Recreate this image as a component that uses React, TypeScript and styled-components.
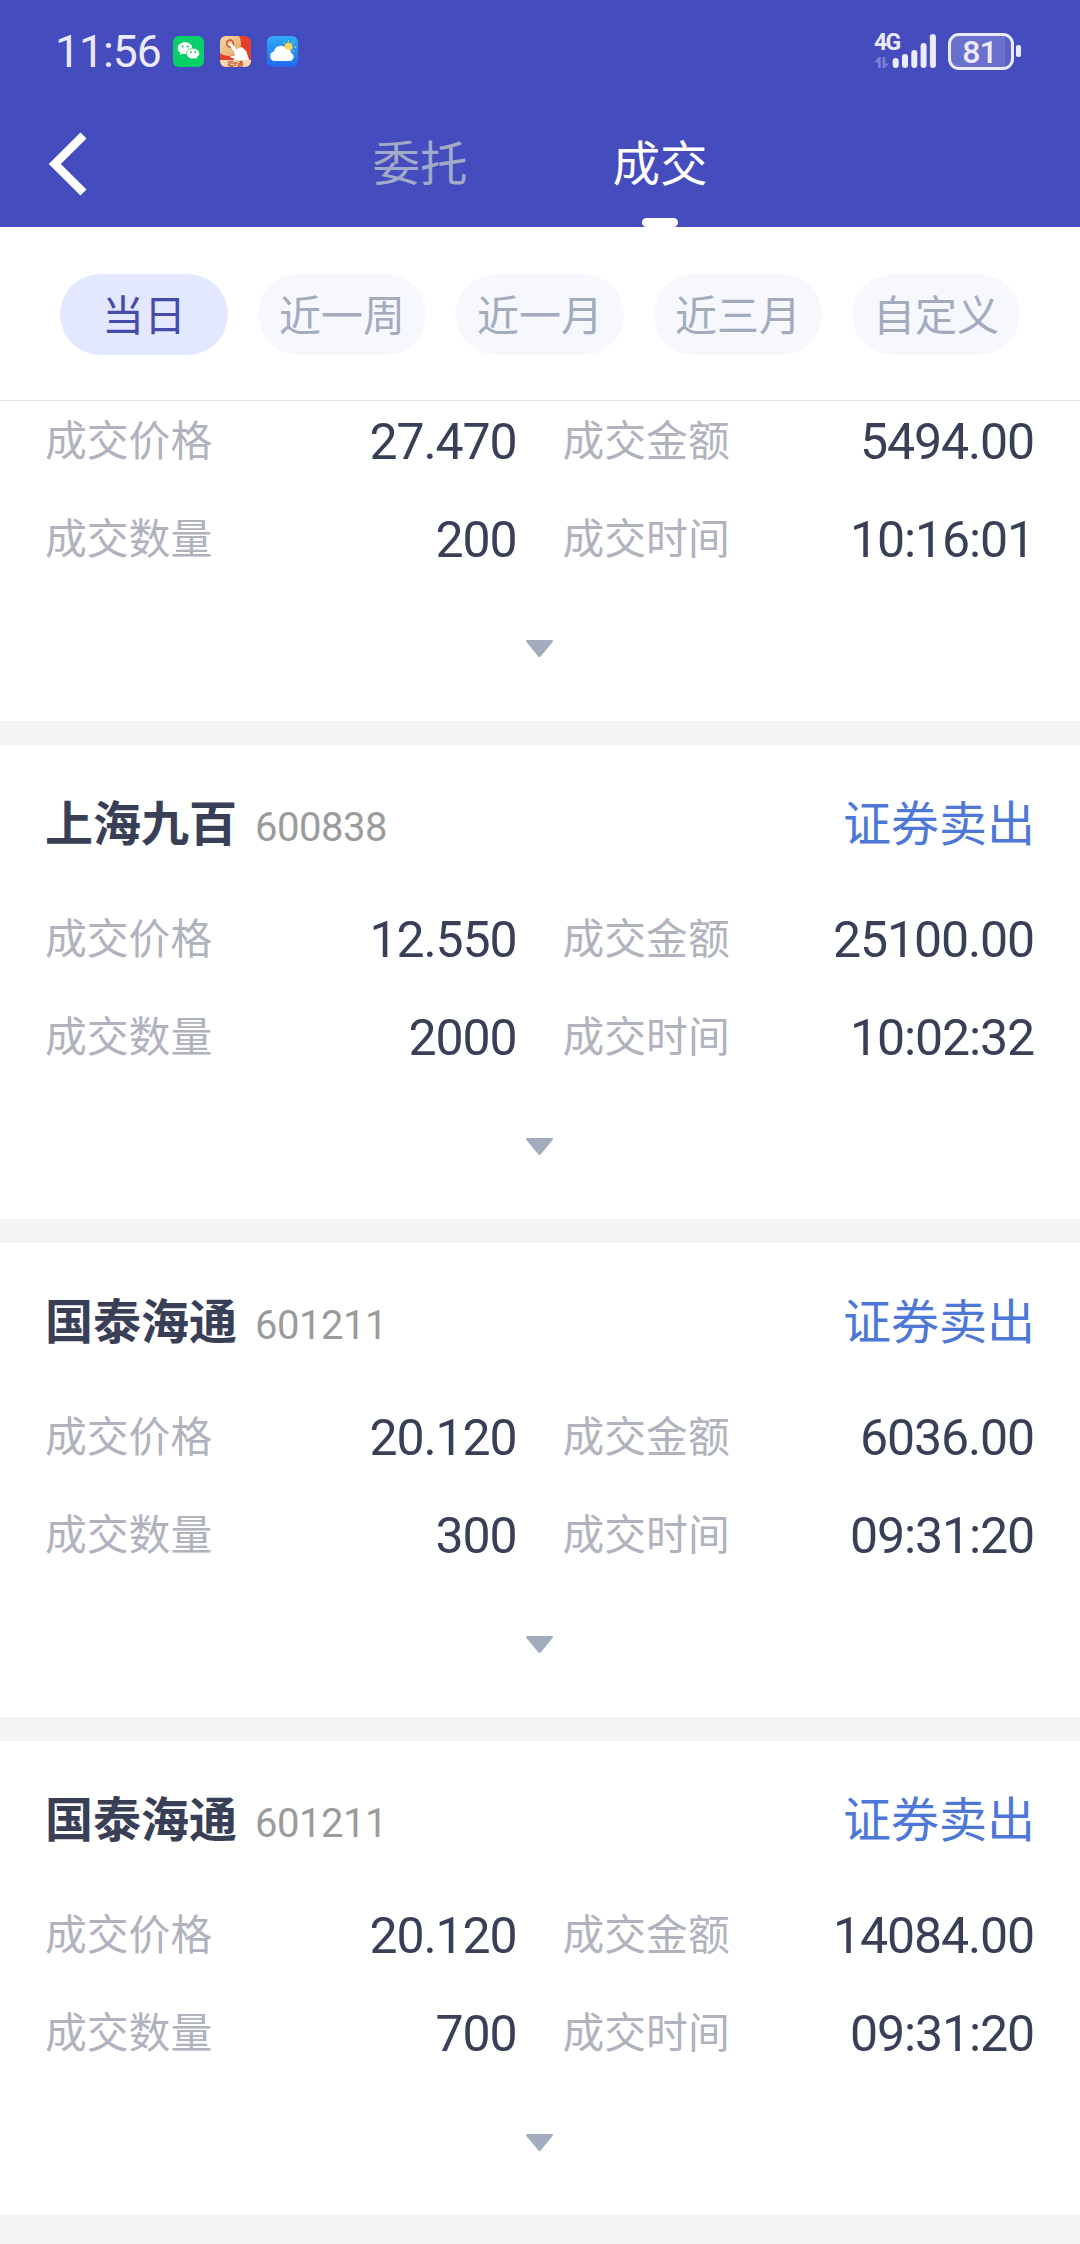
import React from 'react';
import styled, { createGlobalStyle } from 'styled-components';

const GlobalStyle = createGlobalStyle`
  * { box-sizing: border-box; }
  html, body { margin: 0; padding: 0; background: #f3f4f6; }
  body {
    width: 1080px;
    height: 2244px;
    overflow: hidden;
    font-family: "Noto Sans CJK SC", sans-serif;
    color: #393f57;
  }
`;

const numeric = 'Roboto, "Noto Sans CJK SC", sans-serif';

const Page = styled.div`
  display: flex;
  flex-direction: column;
  width: 1080px;
  height: 2244px;
  overflow: hidden;
  background: #f3f4f6;
`;

const Header = styled.header`
  flex: none;
  height: 227px;
  background: #444cbe;
`;

const StatusBar = styled.div`
  display: flex;
  align-items: center;
  height: 102px;
  padding: 0 59px 0 55px;
`;

const Clock = styled.span`
  width: 109px;
  padding-top: 1px;
  font-family: ${numeric};
  font-size: 44.5px;
  line-height: 60px;
  letter-spacing: -1px;
  color: #ebebfc;
  white-space: nowrap;
`;

const AppIcons = styled.div`
  display: flex;
  gap: 16px;
  margin-left: 9px;
  svg { display: block; }
`;

const Signals = styled.div`
  display: flex;
  align-items: center;
  gap: 12px;
  margin-left: auto;
`;

const Network = styled.div`
  position: relative;
  width: 62px;
  height: 36px;
  svg { display: block; }
`;

const NetworkLabel = styled.span`
  position: absolute;
  left: 0;
  top: -4px;
  font-family: ${numeric};
  font-size: 23px;
  font-weight: 700;
  line-height: 27px;
  letter-spacing: -1.6px;
  color: #ebebfc;
`;

const Battery = styled.div`
  display: flex;
  align-items: center;
  gap: 2px;
`;

const BatteryShell = styled.div`
  width: 66px;
  height: 37px;
  padding-right: 3px;
  border: 3px solid #ebebfc;
  border-radius: 11px;
  background: linear-gradient(to right, #6a70cb 54px, #5a61c5 54px);
  text-align: center;
  font-family: ${numeric};
  font-size: 32px;
  font-weight: 500;
  line-height: 32px;
  letter-spacing: -1px;
  color: #ebebfc;
`;

const BatteryTip = styled.div`
  width: 5px;
  height: 12px;
  border-radius: 2px;
  background: #ebebfc;
`;

const NavBar = styled.nav`
  display: grid;
  grid-template-columns: 300px 240px 240px 300px;
  height: 125px;
`;

const BackButton = styled.button`
  display: flex;
  align-items: flex-start;
  padding: 30px 0 0 48px;
  border: 0;
  background: none;
`;

const Tab = styled.div<{ $active?: boolean }>`
  display: flex;
  flex-direction: column;
  align-items: center;
  justify-content: space-between;
  padding-top: 23px;
  font-size: 47.5px;
  line-height: 72px;
  color: ${(p) => (p.$active ? '#ffffff' : '#a2a9c9')};
`;

const TabMark = styled.span`
  width: 36px;
  height: 9px;
  border-radius: 5px;
  background: #ffffff;
`;

const Filters = styled.div`
  flex: none;
  display: flex;
  gap: 30px;
  height: 174px;
  padding: 47px 60px 0;
  border-bottom: 1px solid #e2e3e6;
  background: #ffffff;
`;

const Pill = styled.button<{ $active?: boolean }>`
  width: 168px;
  height: 81px;
  padding: 0 0 3px;
  border: 0;
  border-radius: 41px;
  font-family: inherit;
  font-size: 42px;
  line-height: 78px;
  text-align: center;
  white-space: nowrap;
  color: ${(p) => (p.$active ? '#444ba9' : '#a3abbe')};
  background: ${(p) => (p.$active ? '#e4e8fe' : '#f6f8fd')};
`;

const List = styled.main`
  display: flex;
  flex-direction: column;
  gap: 24px;
`;

const Card = styled.section<{ $partial?: boolean }>`
  display: flex;
  flex-direction: column;
  height: ${(p) => (p.$partial ? 320 : 474)}px;
  padding: ${(p) => (p.$partial ? 0 : 39)}px 45px 0;
  background: #ffffff;
`;

const CardHead = styled.div`
  display: flex;
  align-items: baseline;
  height: 115px;
  line-height: 72px;
`;

const Name = styled.h2`
  margin: 0;
  font-size: 48px;
  font-weight: 700;
  line-height: 72px;
`;

const Code = styled.span`
  margin-left: 18px;
  font-family: ${numeric};
  font-size: 40px;
  letter-spacing: -0.5px;
  color: #9b9b9b;
`;

const Side = styled.span`
  margin-left: auto;
  font-size: 48px;
  color: #4e78d8;
`;

const Facts = styled.dl`
  display: grid;
  grid-template-columns: 1fr 1fr;
  grid-auto-rows: 98px;
  column-gap: 45px;
  margin: 0;
`;

const Fact = styled.div`
  display: flex;
  justify-content: space-between;
  height: 80px;
`;

const Term = styled.dt`
  font-size: 41.8px;
  line-height: 75px;
  color: #b0b3be;
`;

const Value = styled.dd`
  margin: 0;
  padding-right: 1px;
  font-family: ${numeric};
  font-size: 50px;
  line-height: 82px;
  letter-spacing: -1.1px;
`;

const Expand = styled.button`
  display: flex;
  justify-content: center;
  width: 100%;
  padding: 43px 1px 0 0;
  border: 0;
  background: none;
`;

function WeChatIcon() {
  return (
    <svg width="31" height="31" viewBox="0 0 31 31">
      <rect width="31" height="31" rx="6" fill="#07d068" />
      <path d="M12 6.200c-4.200 0-7.300 2.700-7.300 6 0 1.900 1 3.500 2.700 4.600l-.7 2.300 2.700-1.300c.9.2 1.700.3 2.600.3 4.200 0 7.300-2.600 7.300-5.900s-3.100-6-7.300-6z" fill="#fff" />
      <circle cx="9.600" cy="10.600" r="1" fill="#07c160" />
      <circle cx="14.600" cy="10.600" r="1" fill="#07c160" />
      <path d="M20 12.300c-3.700 0-6.500 2.400-6.500 5.300s2.800 5.300 6.500 5.300c.8 0 1.500-.1 2.200-.3l2.300 1.200-.6-2.100c1.600-1 2.600-2.500 2.600-4.100 0-2.900-2.800-5.300-6.500-5.300z" fill="#fff" stroke="#07d068" strokeWidth=".8" />
      <circle cx="17.900" cy="16.200" r=".9" fill="#07c160" />
      <circle cx="22.200" cy="16.200" r=".9" fill="#07c160" />
    </svg>
  );
}

const BadgeFrame = styled.div`
  position: relative;
  width: 31px;
  height: 31px;
`;

const BadgeText = styled.span`
  position: absolute;
  left: 0;
  right: 0;
  bottom: 0;
  text-align: center;
  font-size: 6px;
  font-weight: 700;
  line-height: 7px;
  color: #c04a28;
`;

function BrokerIcon() {
  return (
    <BadgeFrame>
      <svg width="31" height="31" viewBox="0 0 31 31">
        <defs>
          <clipPath id="broker"><rect width="31" height="31" rx="6" /></clipPath>
          <linearGradient id="coin" x1="0" y1="0" x2="1" y2="1">
            <stop offset="0" stopColor="#fbe6c0" />
            <stop offset="1" stopColor="#e0a860" />
          </linearGradient>
        </defs>
        <g clipPath="url(#broker)">
          <rect width="31" height="31" fill="#e2402c" />
          <circle cx="8" cy="7" r="13" fill="url(#coin)" />
          <circle cx="10" cy="7.500" r="3.400" fill="none" stroke="#dd5230" strokeWidth="1.600" />
          <path d="M9.300 7.300c.8-.8 1.800-.5 2.400.3l5 6 3.200-2c1-.7 2.400-.5 3.200.3l3.400 3.500 3 10H12.500l2-2.600-3.700-1.300c-.9-.6-.7-1.500.2-1.700l3.600-.3-.4-3.700-5-7c-.3-.5-.2-1.100.2-1.500z" fill="#fff" />
          <path d="M0 24h31v7H0z" fill="#f8d8b0" />
        </g>
      </svg>
      <BadgeText>招e通</BadgeText>
    </BadgeFrame>
  );
}

function WeatherIcon() {
  return (
    <svg width="31" height="31" viewBox="0 0 31 31">
      <defs>
        <linearGradient id="sky" x1="0" y1="0" x2="0" y2="1">
          <stop offset="0" stopColor="#2fabf8" />
          <stop offset="1" stopColor="#2269ee" />
        </linearGradient>
      </defs>
      <rect width="31" height="31" rx="6" fill="url(#sky)" />
      <circle cx="21.500" cy="10.800" r="4" fill="#f7d65c" />
      <path d="M21.500 4.600v1M16.600 6.300l.8.8M26.400 6.300l-.8.8M27.600 11.200h1.200M25.800 15l.8.8" stroke="#f7d65c" strokeWidth="1" strokeLinecap="round" />
      <path d="M7.800 25a4.900 4.900 0 0 1-.6-9.700 6.300 6.300 0 0 1 11.900-2 5 5 0 0 1 5.200 3.900A4.100 4.100 0 0 1 22.400 25z" fill="#fff" />
    </svg>
  );
}

function SignalIcon() {
  return (
    <svg width="62" height="36" viewBox="0 0 62 36">
      <path d="M0 29.300 5 24h1.700v11H3.900v-5.700z" fill="#7b80d6" />
      <path d="M8.500 24h2.700v6.500h4L10.500 35h-2z" fill="#7b80d6" />
      {[10, 14, 18, 25, 34].map((h, i) => (
        <rect key={h} x={18.700 + i * 9.300} y={35 - h} width="6" height={h} rx="3" fill="#ebebfc" />
      ))}
    </svg>
  );
}

interface Trade {
  name?: string;
  code?: string;
  price: string;
  amount: string;
  quantity: string;
  time: string;
}

const trades: Trade[] = [
  { price: '27.470', amount: '5494.00', quantity: '200', time: '10:16:01' },
  { name: '上海九百', code: '600838', price: '12.550', amount: '25100.00', quantity: '2000', time: '10:02:32' },
  { name: '国泰海通', code: '601211', price: '20.120', amount: '6036.00', quantity: '300', time: '09:31:20' },
  { name: '国泰海通', code: '601211', price: '20.120', amount: '14084.00', quantity: '700', time: '09:31:20' },
];

function TradeCard({ trade }: { trade: Trade }) {
  const facts = [
    ['成交价格', trade.price],
    ['成交金额', trade.amount],
    ['成交数量', trade.quantity],
    ['成交时间', trade.time],
  ];
  return (
    <Card $partial={!trade.name}>
      {trade.name && (
        <CardHead>
          <Name>{trade.name}</Name>
          <Code>{trade.code}</Code>
          <Side>证券卖出</Side>
        </CardHead>
      )}
      <Facts>
        {facts.map(([term, value]) => (
          <Fact key={term}>
            <Term>{term}</Term>
            <Value>{value}</Value>
          </Fact>
        ))}
      </Facts>
      <Expand aria-label="展开">
        <svg width="27" height="17" viewBox="0 0 27 17">
          <path d="M1.300 0h24.400c1.100 0 1.600 1.100.9 1.900L14.600 16.400c-.6.7-1.600.7-2.200 0L.4 1.900C-.3 1.100.2 0 1.300 0z" fill="#a3abbe" />
        </svg>
      </Expand>
    </Card>
  );
}

const ranges = ['当日', '近一周', '近一月', '近三月', '自定义'];

export default function App() {
  return (
    <Page>
      <GlobalStyle />
      <Header>
        <StatusBar>
          <Clock>11:56</Clock>
          <AppIcons>
            <WeChatIcon />
            <BrokerIcon />
            <WeatherIcon />
          </AppIcons>
          <Signals>
            <Network>
              <SignalIcon />
              <NetworkLabel>4G</NetworkLabel>
            </Network>
            <Battery>
              <BatteryShell>81</BatteryShell>
              <BatteryTip />
            </Battery>
          </Signals>
        </StatusBar>
        <NavBar>
          <BackButton aria-label="返回">
            <svg width="40" height="64" viewBox="0 0 40 64">
              <path d="M35.500 3.500 6.800 32l28.700 28.500" fill="none" stroke="#fff" strokeWidth="8.500" />
            </svg>
          </BackButton>
          <Tab>委托</Tab>
          <Tab $active>
            成交
            <TabMark />
          </Tab>
        </NavBar>
      </Header>
      <Filters>
        {ranges.map((label, i) => (
          <Pill key={label} $active={i === 0}>{label}</Pill>
        ))}
      </Filters>
      <List>
        {trades.map((trade, i) => (
          <TradeCard key={i} trade={trade} />
        ))}
      </List>
    </Page>
  );
}
